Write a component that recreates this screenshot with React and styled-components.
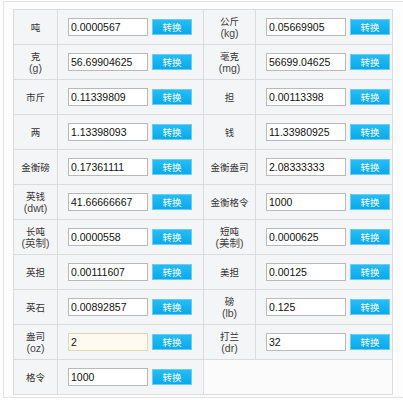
import React from "react";
import styled, { createGlobalStyle } from "styled-components";

const GlobalStyle = createGlobalStyle`
  html, body {
    margin: 0;
    padding: 0;
    background: #ffffff;
  }
  body {
    font-family: "Liberation Sans", Arial, "Noto Sans CJK SC", sans-serif;
  }
`;

const rows = [
  [{ name: "吨", value: "0.0000567" }, { name: "公斤", unit: "(kg)", value: "0.05669905" }],
  [{ name: "克", unit: "(g)", value: "56.69904625" }, { name: "毫克", unit: "(mg)", value: "56699.04625" }],
  [{ name: "市斤", value: "0.11339809" }, { name: "担", value: "0.00113398" }],
  [{ name: "两", value: "1.13398093" }, { name: "钱", value: "11.33980925" }],
  [{ name: "金衡磅", value: "0.17361111" }, { name: "金衡盎司", value: "2.08333333" }],
  [{ name: "英钱", unit: "(dwt)", value: "41.66666667" }, { name: "金衡格令", value: "1000" }],
  [{ name: "长吨", unit: "(英制)", value: "0.0000558" }, { name: "短吨", unit: "(美制)", value: "0.0000625" }],
  [{ name: "英担", value: "0.00111607" }, { name: "美担", value: "0.00125" }],
  [{ name: "英石", value: "0.00892857" }, { name: "磅", unit: "(lb)", value: "0.125" }],
  [{ name: "盎司", unit: "(oz)", value: "2", active: true }, { name: "打兰", unit: "(dr)", value: "32" }],
  [{ name: "格令", value: "1000" }],
];

export default function App() {
  return (
    <>
      <GlobalStyle />
      <Frame>
        <Grid>
          {rows.map((row, i) =>
            [0, 1].map((col) => {
              const item = row[col];
              if (!item) {
                return <Empty key={`${i}-${col}`} />;
              }
              return (
                <React.Fragment key={`${i}-${col}`}>
                  <Label>
                    <span>{item.name}</span>
                    {item.unit && <Unit>{item.unit}</Unit>}
                  </Label>
                  <ValueCell>
                    <Input defaultValue={item.value} $active={item.active} />
                    <Button type="button">转换</Button>
                  </ValueCell>
                </React.Fragment>
              );
            })
          )}
        </Grid>
      </Frame>
    </>
  );
}

const Frame = styled.div`
  box-sizing: border-box;
  width: 410px;
  height: 397px;
  margin: 1px 0 0 3px;
  padding: 7px 0 0 9px;
  border: 1px solid #e4e4e4;
  border-right: none;
  background: #fdfdfd;
`;

const Grid = styled.div`
  display: grid;
  grid-template-columns: 43px 145px 51px 136px;
  grid-auto-rows: 34px;
  gap: 1px;
  padding: 1px;
  width: max-content;
  background: #dcdcdc;
`;

const Label = styled.div`
  display: flex;
  flex-direction: column;
  align-items: center;
  justify-content: center;
  background: #f4f5f6;
  color: #333;
  font-family: "Noto Sans CJK SC", sans-serif;
  font-size: 9.5px;
  line-height: 12px;
  text-align: center;

  span {
    display: block;
    line-height: 12px;
  }
`;

const Unit = styled.span`
  font-family: "Liberation Sans", Arial, "Noto Sans CJK SC", sans-serif;
  font-size: 10.5px;
  color: #444;
`;

const ValueCell = styled.div`
  display: flex;
  align-items: center;
  gap: 4px;
  padding-left: 10px;
  background: #f4f5f6;
`;

const Empty = styled.div`
  grid-column: span 2;
  background: #fbfbfb;
`;

const Input = styled.input`
  box-sizing: border-box;
  width: 80px;
  height: 18px;
  margin: 0;
  padding: 0 2px;
  border: 1px solid ${(p) => (p.$active ? "#e2d6b8" : "#b9b9b9")};
  background: ${(p) => (p.$active ? "#fffaf0" : "#ffffff")};
  color: #111;
  font-family: "Liberation Sans", Arial, sans-serif;
  font-size: 10.5px;
  outline: none;
`;

const Button = styled.button`
  box-sizing: border-box;
  width: 40px;
  height: 16px;
  margin: 0;
  padding: 0;
  border: 1px solid #6ccdf4;
  background: linear-gradient(#25bdf5, #0aa9ec);
  color: #ffffff;
  font-family: "Noto Sans CJK SC", sans-serif;
  font-size: 9.5px;
  line-height: 14px;
  cursor: pointer;
`;
